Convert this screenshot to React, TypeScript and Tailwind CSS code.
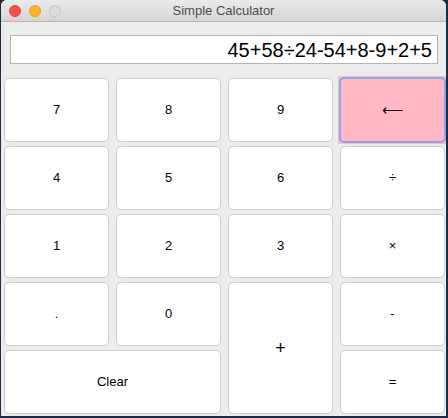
import React, { useState } from 'react';

const keys = [
  { label: '7' }, { label: '8' }, { label: '9' }, { label: '⟵', kind: 'back' },
  { label: '4' }, { label: '5' }, { label: '6' }, { label: '÷' },
  { label: '1' }, { label: '2' }, { label: '3' }, { label: '×' },
  { label: '.' }, { label: '0' }, { label: '+', kind: 'plus' }, { label: '-' },
  { label: 'Clear', kind: 'clear' }, { label: '=' },
];

const App = () => {
  const [expr] = useState('45+58÷24-54+8-9+2+5');

  return (
    <div className="w-[448px] h-[418px] bg-[#1c2b44] overflow-hidden" style={{ fontFamily: '"Liberation Sans", "Noto Sans CJK SC", sans-serif' }}>
      <div className="ml-[1px] w-[445px] h-[416px] bg-[#ececec] rounded-t-[6px] overflow-hidden flex flex-col">
        {/* title bar */}
        <div className="h-[22px] flex items-center relative bg-gradient-to-b from-[#ebebeb] to-[#d5d5d5] border-b border-[#b8b8b8]">
          <div className="flex gap-[8px] pl-[8px]">
            <span className="w-[12px] h-[12px] rounded-full bg-[#fd4e4a] border border-[#e0443e]" />
            <span className="w-[12px] h-[12px] rounded-full bg-[#fdb723] border border-[#dea123]" />
            <span className="w-[12px] h-[12px] rounded-full bg-[#dcdcdc] border border-[#c6c6c6]" />
          </div>
          <div className="absolute inset-0 flex items-center justify-center text-[13px] text-[#4d4d4d]">
            Simple Calculator
          </div>
        </div>

        {/* display */}
        <div className="pt-[13px] pl-[9px] pr-[8px]">
          <div className="h-[29px] bg-white border border-[#b4b4b4] flex items-center justify-end pr-[5px] text-[20px] text-black">
            {expr}
          </div>
        </div>

        {/* keypad */}
        <div className="mt-[14px] ml-[3px] w-[441px] grid grid-cols-4 grid-rows-[repeat(5,64px)] gap-x-[7px] gap-y-[4px]">
          {keys.map((k, i) => {
            if (k.kind === 'back') {
              return (
                <div key={i} className="-m-[2px] p-[1px] bg-[#ffb8c4]">
                  <button className="w-full h-full rounded-[5px] border-2 border-[#82a8f2] bg-[#ffb8c4] text-[15px] font-light text-[#111] flex items-center justify-center">
                    {k.label}
                  </button>
                </div>
              );
            }
            const span = k.kind === 'plus' ? 'row-span-2' : k.kind === 'clear' ? 'col-span-2' : '';
            const size = k.kind === 'plus' ? 'text-[18px]' : 'text-[13px]';
            return (
              <button key={i} className={`${span} ${size} bg-white border border-[#cfcfcf] rounded-[5px] text-black flex items-center justify-center`}>
                {k.label}
              </button>
            );
          })}
        </div>
      </div>
    </div>
  );
};

export default App;
